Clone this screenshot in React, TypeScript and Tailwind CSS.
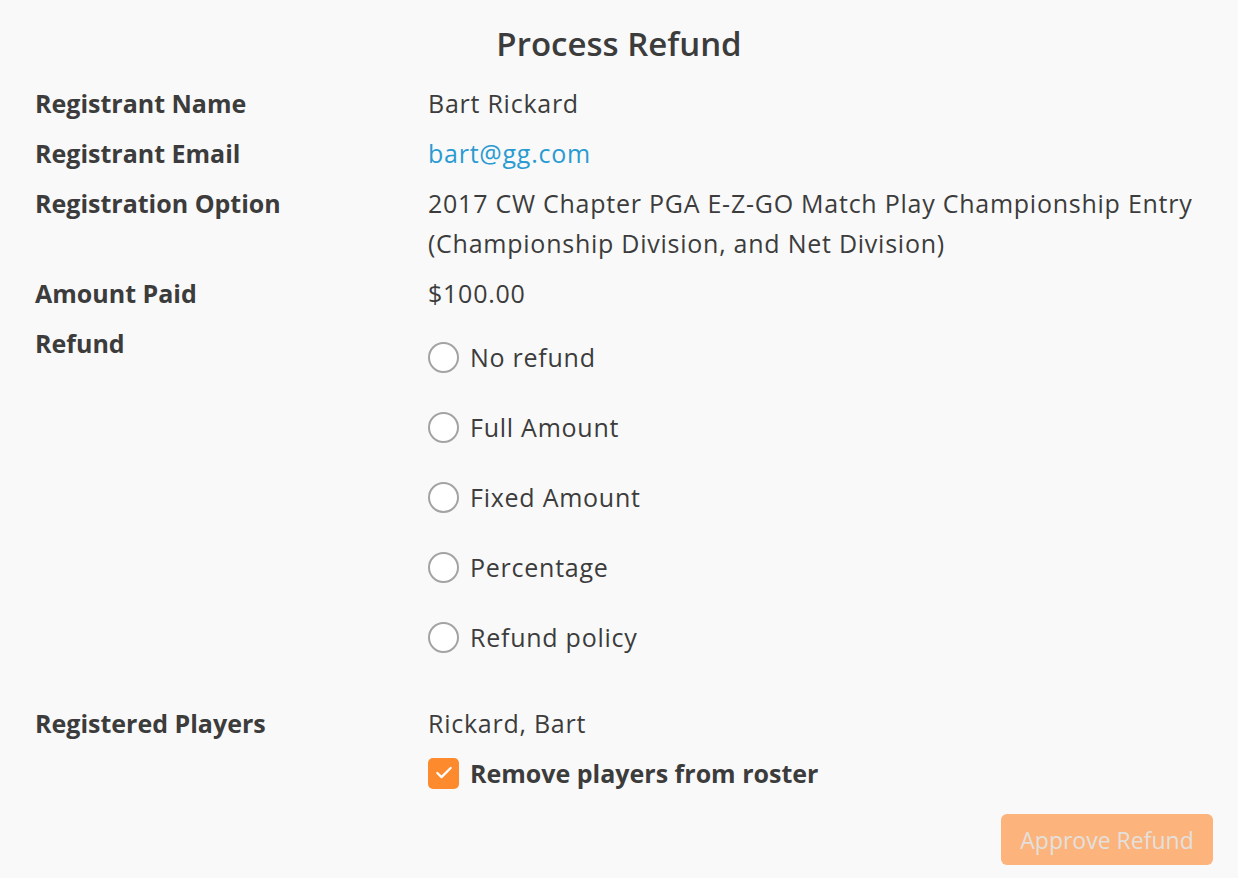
import { Check } from "lucide-react";

const ROWS: { label: string; value: React.ReactNode }[] = [
  { label: "Registrant Name", value: "Bart Rickard" },
  {
    label: "Registrant Email",
    value: <a className="text-[#2a9bd1]">bart@gg.com</a>,
  },
  {
    label: "Registration Option",
    value: "2017 CW Chapter PGA E-Z-GO Match Play Championship Entry (Championship Division, and Net Division)",
  },
  { label: "Amount Paid", value: "$100.00" },
];

const REFUNDS = ["No refund", "Full Amount", "Fixed Amount", "Percentage", "Refund policy"];

function Row({ label, children }: { label: string; children: React.ReactNode }) {
  return (
    <div className="grid grid-cols-[393px_1fr]">
      <div className="font-bold tracking-normal">{label}</div>
      <div>{children}</div>
    </div>
  );
}

export default function App() {
  return (
    <div
      className="min-h-[878px] bg-[#f9f9f9] text-[25px] leading-10 tracking-[0.03em] text-[#3c3c3c]"
      style={{ fontFamily: "'Open Sans', Lato, sans-serif" }}
    >
      <h1 className="pt-[24px] text-center text-[33px] font-semibold leading-10 tracking-normal">Process Refund</h1>

      <div className="mt-[19px] flex flex-col gap-[10px] pl-[35px] pr-[25px]">
        {ROWS.map((r) => (
          <Row key={r.label} label={r.label}>
            {r.value}
          </Row>
        ))}

        <Row label="Refund">
          <div className="flex flex-col gap-[30px] pt-[14px]">
            {REFUNDS.map((opt) => (
              <label key={opt} className="flex h-10 items-center gap-[11px]">
                <span className="h-[31px] w-[31px] shrink-0 rounded-full border-2 border-[#a3a3a3] bg-white" />
                {opt}
              </label>
            ))}
          </div>
        </Row>

        <div className="mt-[36px]">
          <Row label="Registered Players">
            <div className="flex flex-col gap-[10px]">
              <div>Rickard, Bart</div>
              <label className="flex h-10 items-center gap-[11px] font-bold tracking-normal">
                <span className="flex h-[31px] w-[31px] shrink-0 items-center justify-center rounded-[5px] bg-[#fd8a2c]">
                  <Check size={20} strokeWidth={2.75} className="text-white" />
                </span>
                Remove players from roster
              </label>
            </div>
          </Row>
        </div>
      </div>

      <div className="mt-[21px] flex justify-end pr-[25px]">
        <button className="h-[51px] w-[212px] rounded-[6px] bg-[#fcb37c] text-[23px] tracking-normal text-[#e4e0dc]">
          Approve Refund
        </button>
      </div>
    </div>
  );
}
